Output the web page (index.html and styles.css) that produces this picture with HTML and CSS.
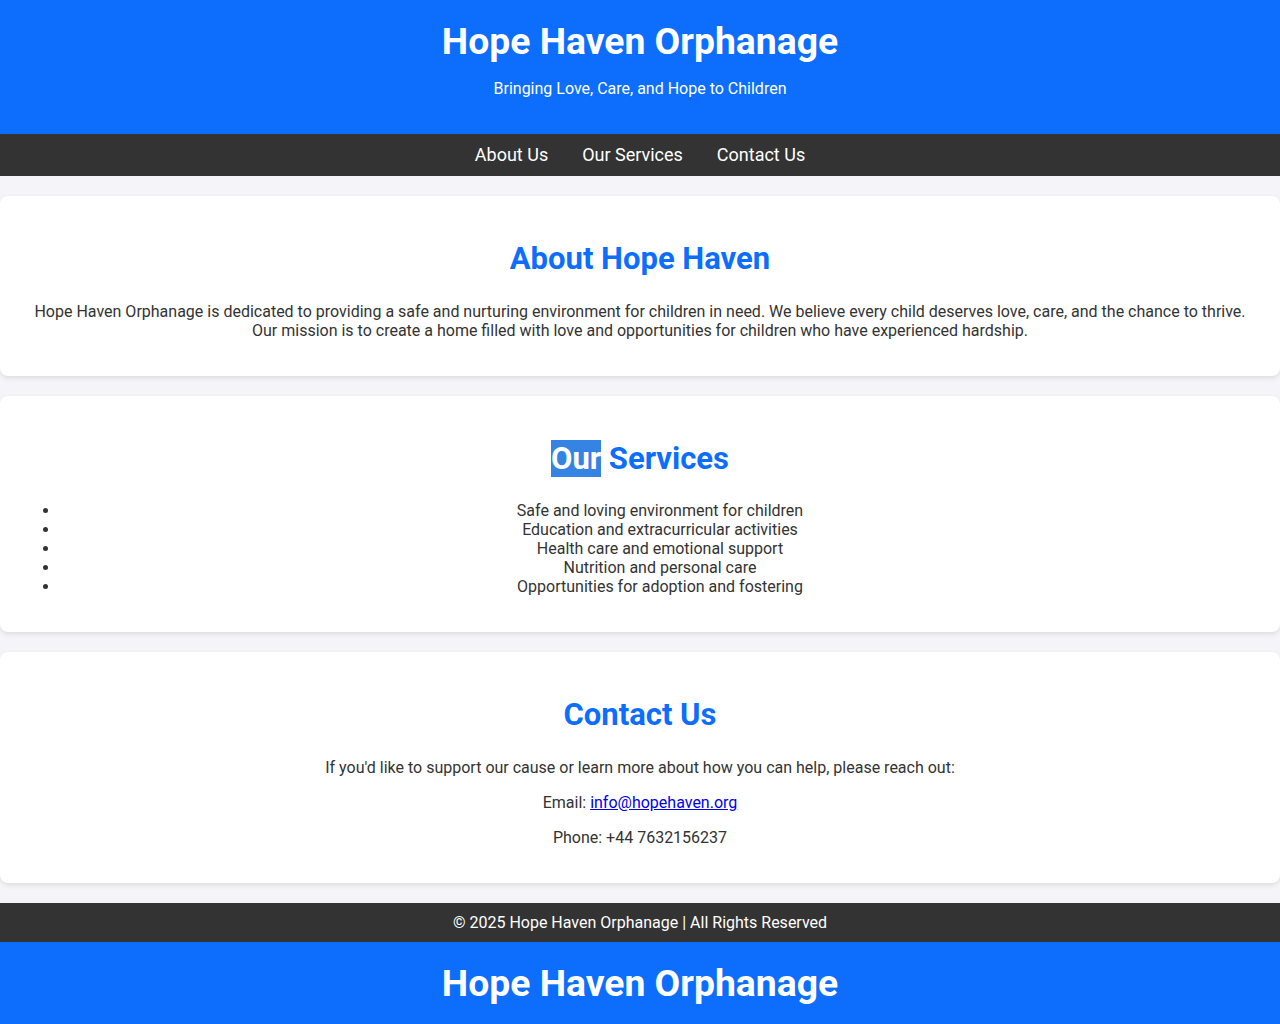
FILE: index.html
```html
<!DOCTYPE html>
<html lang="en">

<head>
    <meta charset="UTF-8">
    <meta name="viewport" content="width=device-width, initial-scale=1.0">
    <title>Hope Haven Orphanage</title>
    <link rel="stylesheet" href="styles.css">
</head>

<body>

    <header>
        <h1>Hope Haven Orphanage</h1>
        <p>Bringing Love, Care, and Hope to Children</p>
    </header>

    <nav>
        <a href="#about">About Us</a>
        <a href="#services">Our Services</a>
        <a href="#contact">Contact Us</a>
    </nav>

    <main>
        <section id="about">
            <h2>About Hope Haven</h2>
            <p>Hope Haven Orphanage is dedicated to providing a safe and nurturing environment for children in need. We believe every child deserves love, care, and the chance to thrive. Our mission is to create a home filled with love and opportunities for children who have experienced hardship.</p>
        </section>

        <section id="services">
            <h2><span class="selected">Our</span> Services</h2>
            <ul>
                <li>Safe and loving environment for children</li>
                <li>Education and extracurricular activities</li>
                <li>Health care and emotional support</li>
                <li>Nutrition and personal care</li>
                <li>Opportunities for adoption and fostering</li>
            </ul>
        </section>

        <section id="contact">
            <h2>Contact Us</h2>
            <p>If you'd like to support our cause or learn more about how you can help, please reach out:</p>
            <p>Email: <a href="mailto:info@hopehaven.org">info@hopehaven.org</a></p>
            <p>Phone: +44 7632156237</p>
        </section>
    </main>

    <footer>
        <p>&copy; 2025 Hope Haven Orphanage | All Rights Reserved</p>
    </footer>

    <header>
        <h1>Hope Haven Orphanage</h1>
        <p>Bringing Love, Care, and Hope to Children</p>
    </header>

</body>

</html>
```

FILE: styles.css
```css
body {
    font-family: Roboto, "Liberation Sans", sans-serif;
    background-color: #f4f4f9;
    color: #333;
    margin: 0;
    padding: 0;
}

header {
    background-color: #0d6efd;
    color: white;
    text-align: center;
    padding: 19px 20px 20px;
}

header h1 {
    margin: 0;
    font-size: 37.3px;
}

nav {
    background-color: #333;
    text-align: center;
    padding: 10px 10px 11px;
}

nav a {
    color: white;
    text-decoration: none;
    font-size: 18px;
    margin: 0 15px;
}

section {
    background-color: white;
    margin: 20px 0;
    padding: 20px;
    border-radius: 8px;
    box-shadow: 0 2px 5px rgba(0, 0, 0, 0.1);
    text-align: center;
}

section h2 {
    color: #0d6efd;
    font-size: 31px;
    margin: 24px 0 24.7px;
}

.selected {
    background-color: #3584e4;
    color: white;
}

footer {
    background-color: #333;
    color: white;
    text-align: center;
    padding: 10px;
}

footer p {
    margin: 0;
}
```
